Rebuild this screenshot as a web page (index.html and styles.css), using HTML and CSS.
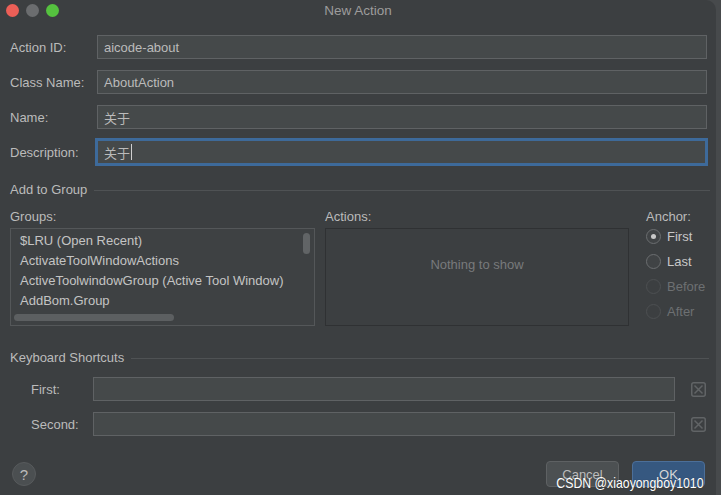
FILE: index.html
```html
<!DOCTYPE html>
<html lang="en">
  <head>
    <title>New Action</title>
    <meta charset="UTF-8" />
    <link rel="stylesheet" href="styles.css">
  </head>
  <body>
    <div class="window">
      <div class="titlebar">
        <div class="lights">
          <span class="light red"></span>
          <span class="light gray"></span>
          <span class="light green"></span>
        </div>
        <div class="title">New Action</div>
      </div>

      <div class="fields">
        <div class="row">
          <label>Action ID:</label>
          <div class="input">aicode-about</div>
        </div>
        <div class="row">
          <label>Class Name:</label>
          <div class="input">AboutAction</div>
        </div>
        <div class="row">
          <label>Name:</label>
          <div class="input">关于</div>
        </div>
        <div class="row">
          <label>Description:</label>
          <div class="input focused">关于<span class="caret"></span></div>
        </div>
      </div>

      <div class="section group-title">
        <span>Add to Group</span>
        <div class="sep"></div>
      </div>

      <div class="groups">
        <div class="col col-groups">
          <div class="col-label">Groups:</div>
          <div class="listbox">
            <ul class="list">
              <li>$LRU (Open Recent)</li>
              <li>ActivateToolWindowActions</li>
              <li>ActiveToolwindowGroup (Active Tool Window)</li>
              <li>AddBom.Group</li>
            </ul>
            <div class="vthumb"></div>
            <div class="hthumb"></div>
          </div>
        </div>
        <div class="col col-actions">
          <div class="col-label">Actions:</div>
          <div class="emptybox">Nothing to show</div>
        </div>
        <div class="col col-anchor">
          <div class="col-label">Anchor:</div>
          <div class="radio checked"><span class="dot"></span>First</div>
          <div class="radio"><span class="dot"></span>Last</div>
          <div class="radio disabled"><span class="dot"></span>Before</div>
          <div class="radio disabled"><span class="dot"></span>After</div>
        </div>
      </div>

      <div class="section keys-title">
        <span>Keyboard Shortcuts</span>
        <div class="sep"></div>
      </div>

      <div class="shortcuts">
        <div class="srow">
          <label>First:</label>
          <div class="input"></div>
          <svg class="clear" width="15" height="15" viewBox="0 0 15 15">
            <rect x="0.75" y="0.75" width="13.5" height="13.5" rx="2" fill="none" stroke="#616466" stroke-width="1.5"/>
            <path d="M3.5 3.5 L11.5 11.5 M11.5 3.5 L3.5 11.5" stroke="#616466" stroke-width="1.5"/>
          </svg>
        </div>
        <div class="srow">
          <label>Second:</label>
          <div class="input"></div>
          <svg class="clear" width="15" height="15" viewBox="0 0 15 15">
            <rect x="0.75" y="0.75" width="13.5" height="13.5" rx="2" fill="none" stroke="#616466" stroke-width="1.5"/>
            <path d="M3.5 3.5 L11.5 11.5 M11.5 3.5 L3.5 11.5" stroke="#616466" stroke-width="1.5"/>
          </svg>
        </div>
      </div>

      <div class="footer">
        <div class="help">?</div>
        <div class="buttons">
          <button class="btn">Cancel</button>
          <button class="btn primary">OK</button>
        </div>
      </div>

      <div class="watermark">CSDN @xiaoyongboy1010</div>
    </div>
  </body>
</html>
```

FILE: styles.css
```css
body {
  margin: 0;
  padding: 0;
  background: #474a4c;
  font-family: "Liberation Sans", Arial, sans-serif;
  font-size: 13px;
  color: #bbbbbb;
}
.window {
  position: relative;
  width: 716px;
  height: 495px;
  background: #3c3f41;
  border-top-right-radius: 10px;
  overflow: hidden;
}
.titlebar {
  height: 21px;
  display: flex;
  align-items: center;
  position: relative;
}
.lights {
  display: flex;
  gap: 7px;
  padding-left: 6px;
}
.light {
  width: 13px;
  height: 13px;
  border-radius: 50%;
}
.light.red { background: #ec5f57; }
.light.gray { background: #6b6d6f; }
.light.green { background: #55c23f; }
.title {
  position: absolute;
  left: 0;
  right: 0;
  text-align: center;
  color: #9c9c9c;
  font-size: 13.5px;
}

.fields {
  padding: 14px 10px 0 10px;
}
.row {
  display: flex;
  align-items: center;
  margin-bottom: 11px;
}
.row label {
  width: 87px;
}
.input {
  box-sizing: border-box;
  height: 24px;
  flex: 1;
  background: #45494a;
  border: 1px solid #5f6264;
  padding: 0 6px;
  display: flex;
  align-items: center;
  color: #bbbbbb;
  font-family: "Liberation Sans", "Noto Sans CJK SC", sans-serif;
}
.fields .input {
  margin-right: -1px;
}
.input.focused {
  border: 1px solid #3e6a99;
  box-shadow: 0 0 0 2px #3d6a9b;
  margin-right: 0;
}
.caret {
  display: inline-block;
  width: 1px;
  height: 16px;
  background: #cfcfcf;
  margin-left: 1px;
}

.section {
  display: flex;
  align-items: center;
  padding-left: 10px;
  padding-right: 6px;
}
.sep {
  flex: 1;
  height: 1px;
  background: #4f5254;
  margin-left: 7px;
  margin-top: 2px;
}
.group-title {
  margin-top: 18px;
}

.groups {
  display: flex;
  padding: 12px 0 0 10px;
}
.col-label {
  height: 19px;
}
.col-groups {
  width: 305px;
}
.listbox {
  position: relative;
  box-sizing: border-box;
  height: 98px;
  border: 1px solid #545759;
  background: #3e4143;
}
.list {
  list-style: none;
  margin: 0;
  padding: 2px 0 0 9px;
}
.list li {
  height: 20px;
  line-height: 20px;
  color: #c4c4c4;
  white-space: nowrap;
}
.vthumb {
  position: absolute;
  right: 4px;
  top: 4px;
  width: 7px;
  height: 21px;
  border-radius: 4px;
  background: #616466;
}
.hthumb {
  position: absolute;
  left: 3px;
  bottom: 4px;
  width: 160px;
  height: 7px;
  border-radius: 4px;
  background: #5c5f61;
}
.col-actions {
  width: 304px;
  margin-left: 10px;
}
.emptybox {
  box-sizing: border-box;
  height: 98px;
  border: 1px solid #2f3133;
  display: flex;
  align-items: center;
  justify-content: center;
  color: #787a7c;
  padding-bottom: 26px;
}
.col-anchor {
  margin-left: 17px;
}
.radio {
  display: flex;
  align-items: center;
  height: 25px;
  color: #c8c8c8;
}
.col-label + .radio {
  margin-top: -4px;
}
.radio .dot {
  box-sizing: border-box;
  width: 15px;
  height: 15px;
  border-radius: 50%;
  border: 1px solid #6b6e70;
  background: #404345;
  margin-right: 6px;
  position: relative;
}
.radio.checked .dot::after {
  content: "";
  position: absolute;
  left: 4px;
  top: 4px;
  width: 5px;
  height: 5px;
  border-radius: 50%;
  background: #c8c8c8;
}
.radio.disabled {
  color: #6d7072;
}
.radio.disabled .dot {
  border-color: #4d5052;
  background: #3c3f41;
}

.keys-title {
  margin-top: 24px;
  padding-right: 7px;
}

.shortcuts {
  padding: 12px 0 0 31px;
}
.srow {
  display: flex;
  align-items: center;
  margin-bottom: 11px;
}
.srow label {
  width: 62px;
}
.srow .input {
  flex: none;
  width: 582px;
}
.clear {
  margin-left: 16px;
}

.footer {
  display: flex;
  align-items: center;
  justify-content: space-between;
  padding: 14px 11px 0 12px;
}
.help {
  box-sizing: border-box;
  width: 24px;
  height: 24px;
  border-radius: 50%;
  background: #4b4f51;
  border: 1px solid #575a5c;
  display: flex;
  align-items: center;
  justify-content: center;
  font-size: 15px;
  color: #bbbbbb;
}
.buttons {
  display: flex;
  gap: 13px;
}
.btn {
  box-sizing: border-box;
  width: 73px;
  height: 26px;
  border-radius: 4px;
  border: 1px solid #5e6163;
  background: #4c5052;
  color: #bbbbbb;
  font-family: "Liberation Sans", Arial, sans-serif;
  font-size: 13px;
}
.btn.primary {
  background: #365880;
  border-color: #4c6f99;
  color: #d6d6d6;
}
.watermark {
  position: absolute;
  right: 13px;
  bottom: 4px;
  color: #ffffff;
  font-size: 15px;
  font-family: "Liberation Sans", Arial, sans-serif;
  transform: scaleX(0.82);
  transform-origin: right center;
  text-shadow: 0 0 1px #333;
}
```
